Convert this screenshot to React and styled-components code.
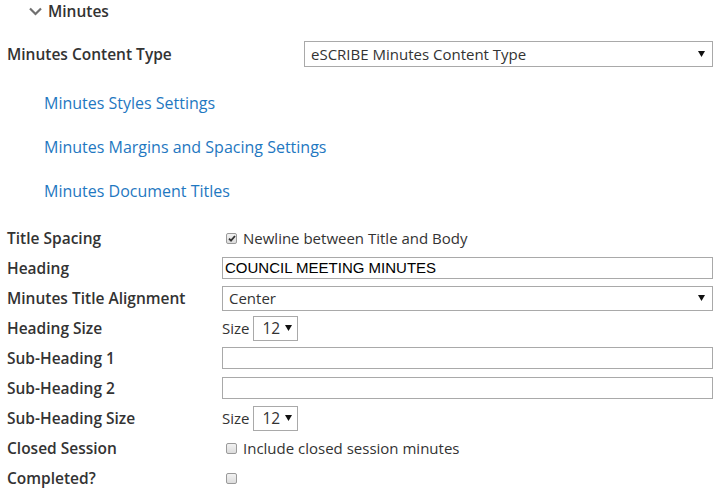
import React from "react";
import styled, { createGlobalStyle } from "styled-components";

const GlobalStyle = createGlobalStyle`
  html, body {
    margin: 0;
    padding: 0;
    background: #fff;
  }
  body {
    font-family: "Open Sans", "Liberation Sans", sans-serif;
    color: #333;
  }
`;

const Page = styled.div`
  width: 719px;
  height: 495px;
  box-sizing: border-box;
  padding: 0 6px 0 7px;
  overflow: hidden;
`;

const SectionHeader = styled.div`
  display: flex;
  align-items: center;
  gap: 6px;
  height: 22px;
  padding-left: 22px;
  font-size: 15.5px;
  font-weight: 600;
  color: #333;
`;

const Chevron = () => (
  <svg width="13" height="9" viewBox="0 0 13 9">
    <path d="M1 1.5 L6.5 7 L12 1.5" fill="none" stroke="#707070" strokeWidth="2.2" />
  </svg>
);

const Row = styled.div`
  display: grid;
  grid-template-columns: ${(p) => p.$labelWidth || "215px"} 1fr;
  align-items: center;
  height: ${(p) => p.$height || "30px"};
`;

const ContentTypeRow = styled(Row)`
  margin-top: 19px;
`;

const Label = styled.div`
  font-size: 15.5px;
  font-weight: 600;
  color: #333;
  white-space: nowrap;
`;

const Links = styled.div`
  display: flex;
  flex-direction: column;
  padding-left: 37px;
  margin-top: 14px;
`;

const LinkItem = styled.a`
  display: block;
  line-height: 44px;
  height: 44px;
  font-size: 16px;
  color: #1f78c1;
  text-decoration: none;
`;

const Form = styled.div`
  margin-top: 10px;
`;

const SelectBox = styled.div`
  display: flex;
  align-items: center;
  justify-content: space-between;
  box-sizing: border-box;
  width: ${(p) => p.$width || "100%"};
  height: ${(p) => p.$height || "25px"};
  padding: 0 ${(p) => p.$padRight || "7px"} 0 ${(p) => p.$padLeft || "6px"};
  border: 1px solid #a9a9a9;
  background: #fff;
  font-size: ${(p) => p.$fontSize || "15px"};
  color: #333;
`;

const Arrow = () => (
  <svg width="7" height="6" viewBox="0 0 7 6">
    <path d="M0 0 H7 L3.5 6 Z" fill="#111" />
  </svg>
);

const TextBox = styled.div`
  box-sizing: border-box;
  width: 100%;
  height: 22px;
  padding: 0 2px;
  border: 1px solid #a9a9a9;
  background: #fff;
  font-family: "Liberation Sans", Arial, sans-serif;
  font-size: 15px;
  line-height: 20px;
  color: #000;
  white-space: nowrap;
`;

const SizeWrap = styled.div`
  display: flex;
  align-items: center;
  gap: 4px;
  font-size: 15px;
  color: #333;
`;

const CheckWrap = styled.label`
  display: flex;
  align-items: center;
  gap: 6px;
  padding-left: 4px;
  font-size: 15px;
  color: #333;
`;

const Box = styled.span`
  display: inline-flex;
  align-items: center;
  justify-content: center;
  box-sizing: border-box;
  width: 11px;
  height: 11px;
  border: 1px solid #9a9a9a;
  border-radius: 2px;
  background: linear-gradient(#f2f2f2, #dcdcdc);
`;

const Checkbox = ({ checked }) => (
  <Box>
    {checked && (
      <svg width="8" height="7" viewBox="0 0 8 7">
        <path d="M1 3.6 L3 5.6 L7 1" fill="none" stroke="#333" strokeWidth="1.8" />
      </svg>
    )}
  </Box>
);

const SizeSelect = () => (
  <SizeWrap>
    Size
    <SelectBox $width="45px" $padLeft="8px" $padRight="5px" $fontSize="15.5px">
      12
      <Arrow />
    </SelectBox>
  </SizeWrap>
);

export default function App() {
  return (
    <Page>
      <GlobalStyle />
      <SectionHeader>
        <Chevron />
        Minutes
      </SectionHeader>

      <ContentTypeRow $labelWidth="297px" $height="26px">
        <Label>Minutes Content Type</Label>
        <SelectBox $height="26px">
          eSCRIBE Minutes Content Type
          <Arrow />
        </SelectBox>
      </ContentTypeRow>

      <Links>
        <LinkItem href="#">Minutes Styles Settings</LinkItem>
        <LinkItem href="#">Minutes Margins and Spacing Settings</LinkItem>
        <LinkItem href="#">Minutes Document Titles</LinkItem>
      </Links>

      <Form>
        <Row>
          <Label>Title Spacing</Label>
          <CheckWrap>
            <Checkbox checked />
            Newline between Title and Body
          </CheckWrap>
        </Row>
        <Row>
          <Label>Heading</Label>
          <TextBox>COUNCIL MEETING MINUTES</TextBox>
        </Row>
        <Row>
          <Label>Minutes Title Alignment</Label>
          <SelectBox>
            Center
            <Arrow />
          </SelectBox>
        </Row>
        <Row>
          <Label>Heading Size</Label>
          <SizeSelect />
        </Row>
        <Row>
          <Label>Sub-Heading 1</Label>
          <TextBox />
        </Row>
        <Row>
          <Label>Sub-Heading 2</Label>
          <TextBox />
        </Row>
        <Row>
          <Label>Sub-Heading Size</Label>
          <SizeSelect />
        </Row>
        <Row>
          <Label>Closed Session</Label>
          <CheckWrap>
            <Checkbox />
            Include closed session minutes
          </CheckWrap>
        </Row>
        <Row>
          <Label>Completed?</Label>
          <CheckWrap>
            <Checkbox />
          </CheckWrap>
        </Row>
      </Form>
    </Page>
  );
}
